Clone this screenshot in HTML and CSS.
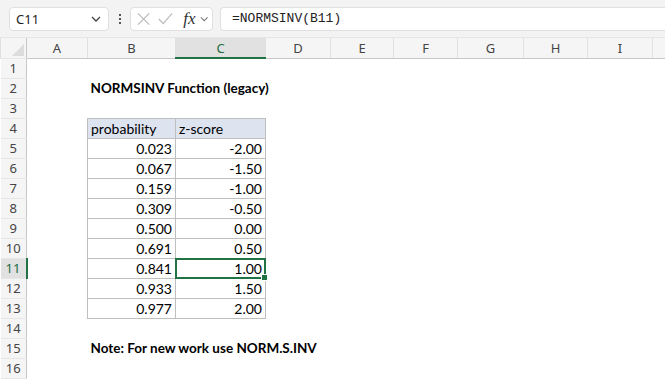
FILE: index.html
```html
<!DOCTYPE html>
<html lang="en">
<head>
  <meta charset="UTF-8">
  <title>NORMSINV Function</title>
  <link rel="stylesheet" href="styles.css">
</head>
<body>
  <div class="formula-bar">
    <div class="name-box">
      <span>C11</span>
      <svg class="chev" width="10" height="6" viewBox="0 0 10 6"><path d="M1 1l4 4 4-4" fill="none" stroke="#444" stroke-width="1.3"/></svg>
    </div>
    <div class="dots"><i></i><i></i><i></i></div>
    <div class="fx-box">
      <svg width="14" height="14" viewBox="0 0 14 14"><path d="M1 1l12 12M13 1L1 13" stroke="#b8b8b8" stroke-width="1.2"/></svg>
      <svg width="16" height="14" viewBox="0 0 16 14"><path d="M1 7l4.5 5L15 1" fill="none" stroke="#b8b8b8" stroke-width="1.2"/></svg>
      <span class="fx">fx</span>
      <svg class="chev" width="9" height="6" viewBox="0 0 10 6"><path d="M1 1l4 4 4-4" fill="none" stroke="#777" stroke-width="1.2"/></svg>
    </div>
    <div class="formula">=NORMSINV(B11)</div>
  </div>

  <table class="sheet">
    <colgroup>
      <col class="c-rh"><col class="c-a"><col class="c-b"><col class="c-c"><col class="c-d">
      <col class="c-e"><col class="c-f"><col class="c-g"><col class="c-h"><col class="c-i"><col>
    </colgroup>
    <tr class="col-head">
      <th class="corner"><span class="tri"></span></th>
      <th>A</th><th>B</th><th class="active">C</th><th>D</th><th>E</th><th>F</th><th>G</th><th>H</th><th>I</th><th></th>
    </tr>
    <tr><th>1</th><td></td><td></td><td></td><td></td><td></td><td></td><td></td><td></td><td></td><td></td></tr>
    <tr><th>2</th><td></td><td class="bold" colspan="3">NORMSINV Function (legacy)</td><td></td><td></td><td></td><td></td><td></td><td></td></tr>
    <tr><th>3</th><td></td><td></td><td></td><td></td><td></td><td></td><td></td><td></td><td></td><td></td></tr>
    <tr><th>4</th><td></td><td class="t head">probability</td><td class="t head">z-score</td><td></td><td></td><td></td><td></td><td></td><td></td><td></td></tr>
    <tr><th>5</th><td></td><td class="t num">0.023</td><td class="t num">-2.00</td><td></td><td></td><td></td><td></td><td></td><td></td><td></td></tr>
    <tr><th>6</th><td></td><td class="t num">0.067</td><td class="t num">-1.50</td><td></td><td></td><td></td><td></td><td></td><td></td><td></td></tr>
    <tr><th>7</th><td></td><td class="t num">0.159</td><td class="t num">-1.00</td><td></td><td></td><td></td><td></td><td></td><td></td><td></td></tr>
    <tr><th>8</th><td></td><td class="t num">0.309</td><td class="t num">-0.50</td><td></td><td></td><td></td><td></td><td></td><td></td><td></td></tr>
    <tr><th>9</th><td></td><td class="t num">0.500</td><td class="t num">0.00</td><td></td><td></td><td></td><td></td><td></td><td></td><td></td></tr>
    <tr><th>10</th><td></td><td class="t num">0.691</td><td class="t num">0.50</td><td></td><td></td><td></td><td></td><td></td><td></td><td></td></tr>
    <tr><th class="active">11</th><td></td><td class="t num">0.841</td><td class="t num selected">1.00</td><td></td><td></td><td></td><td></td><td></td><td></td><td></td></tr>
    <tr><th>12</th><td></td><td class="t num">0.933</td><td class="t num">1.50</td><td></td><td></td><td></td><td></td><td></td><td></td><td></td></tr>
    <tr><th>13</th><td></td><td class="t num">0.977</td><td class="t num">2.00</td><td></td><td></td><td></td><td></td><td></td><td></td><td></td></tr>
    <tr><th>14</th><td></td><td></td><td></td><td></td><td></td><td></td><td></td><td></td><td></td><td></td></tr>
    <tr><th>15</th><td></td><td class="bold" colspan="3">Note: For new work use NORM.S.INV</td><td></td><td></td><td></td><td></td><td></td><td></td></tr>
    <tr><th>16</th><td></td><td></td><td></td><td></td><td></td><td></td><td></td><td></td><td></td><td></td></tr>
  </table>
</body>
</html>
```

FILE: styles.css
```css
body {
  margin: 0;
  background: #fff;
  font-family: "Noto Sans", sans-serif;
  overflow: hidden;
}

/* formula bar */
.formula-bar {
  display: flex;
  align-items: center;
  height: 38px;
  padding-left: 9px;
  background: #f3f3f3;
  border-bottom: 1px solid #e6e6e6;
  box-sizing: border-box;
}

.name-box {
  display: flex;
  align-items: center;
  justify-content: space-between;
  width: 100px;
  height: 24px;
  padding: 0 7px 0 6px;
  box-sizing: border-box;
  background: #fff;
  border: 1px solid #e0e0e0;
  border-radius: 4px;
  font-size: 13px;
  color: #222;
}

.dots {
  display: flex;
  flex-direction: column;
  gap: 2px;
  margin: 0 9px 0 10px;
}

.dots i {
  width: 2px;
  height: 2px;
  background: #555;
}

.fx-box {
  display: flex;
  align-items: center;
  gap: 8px;
  width: 83px;
  height: 24px;
  padding: 0 4px 0 6px;
  box-sizing: border-box;
  background: #fff;
  border: 1px solid #e0e0e0;
  border-radius: 4px;
}

.fx-box .fx {
  font-family: "Liberation Serif", serif;
  font-style: italic;
  font-size: 17px;
  line-height: 20px;
  color: #333;
  margin-left: 2px;
  margin-right: -4px;
}

.formula {
  flex: 1;
  height: 24px;
  margin-left: 7px;
  padding-left: 11px;
  box-sizing: border-box;
  background: #fff;
  border: 1px solid #e0e0e0;
  border-right: none;
  border-radius: 4px 0 0 4px;
  font-family: "Liberation Mono", monospace;
  font-size: 13px;
  line-height: 22px;
  color: #222;
}

/* grid */
.sheet {
  border-collapse: collapse;
  table-layout: fixed;
  width: 100%;
}

.c-rh { width: 26px; }
.c-a { width: 61px; }
.c-b { width: 88px; }
.c-c { width: 90px; }
.c-d { width: 65px; }
.c-e { width: 63px; }
.c-f { width: 64px; }
.c-g { width: 66px; }
.c-h { width: 64px; }
.c-i { width: 65px; }

.sheet tr {
  height: 20px;
}

.sheet th {
  padding: 0;
  font-weight: normal;
  font-size: 13px;
  color: #444;
  background: #f5f5f5;
}

.col-head {
  height: 20px;
}

.col-head th {
  border-left: 1px solid #e0e0e0;
  border-bottom: 1px solid #c8c8c8;
  text-align: center;
}

.col-head th.active {
  background: #e1e1e1;
  color: #1e6b3f;
  border-bottom: 2px solid #217346;
}

.corner {
  position: relative;
}

.corner .tri {
  position: absolute;
  right: 2px;
  bottom: 2px;
  border-style: solid;
  border-width: 0 0 12px 12px;
  border-color: transparent transparent #dcdcdc transparent;
}

.sheet tr > th:first-child {
  text-align: center;
  border-right: 1px solid #c8c8c8;
  border-bottom: 1px solid #e6e6e6;
}

.sheet tr > th.active:first-child {
  background: #e1e1e1;
  color: #1e6b3f;
  border-right: 2px solid #217346;
}

.sheet td {
  padding: 0 3px;
  font-family: "Lato", sans-serif;
  font-size: 14px;
  color: #000;
  white-space: nowrap;
  overflow: visible;
}

.sheet td.bold {
  font-weight: bold;
  font-size: 13.5px;
}

.t {
  border: 1px solid #bfbfbf;
}

.t.head {
  background: #dde3ef;
}

.num {
  text-align: right;
}

.selected {
  position: relative;
}

.selected::after {
  content: "";
  position: absolute;
  left: -1px;
  top: -1px;
  right: -1px;
  bottom: -1px;
  border: 2px solid #217346;
}

.selected::before {
  content: "";
  position: absolute;
  right: -3px;
  bottom: -3px;
  width: 5px;
  height: 5px;
  background: #217346;
  border: 1px solid #fff;
  z-index: 1;
}
```
